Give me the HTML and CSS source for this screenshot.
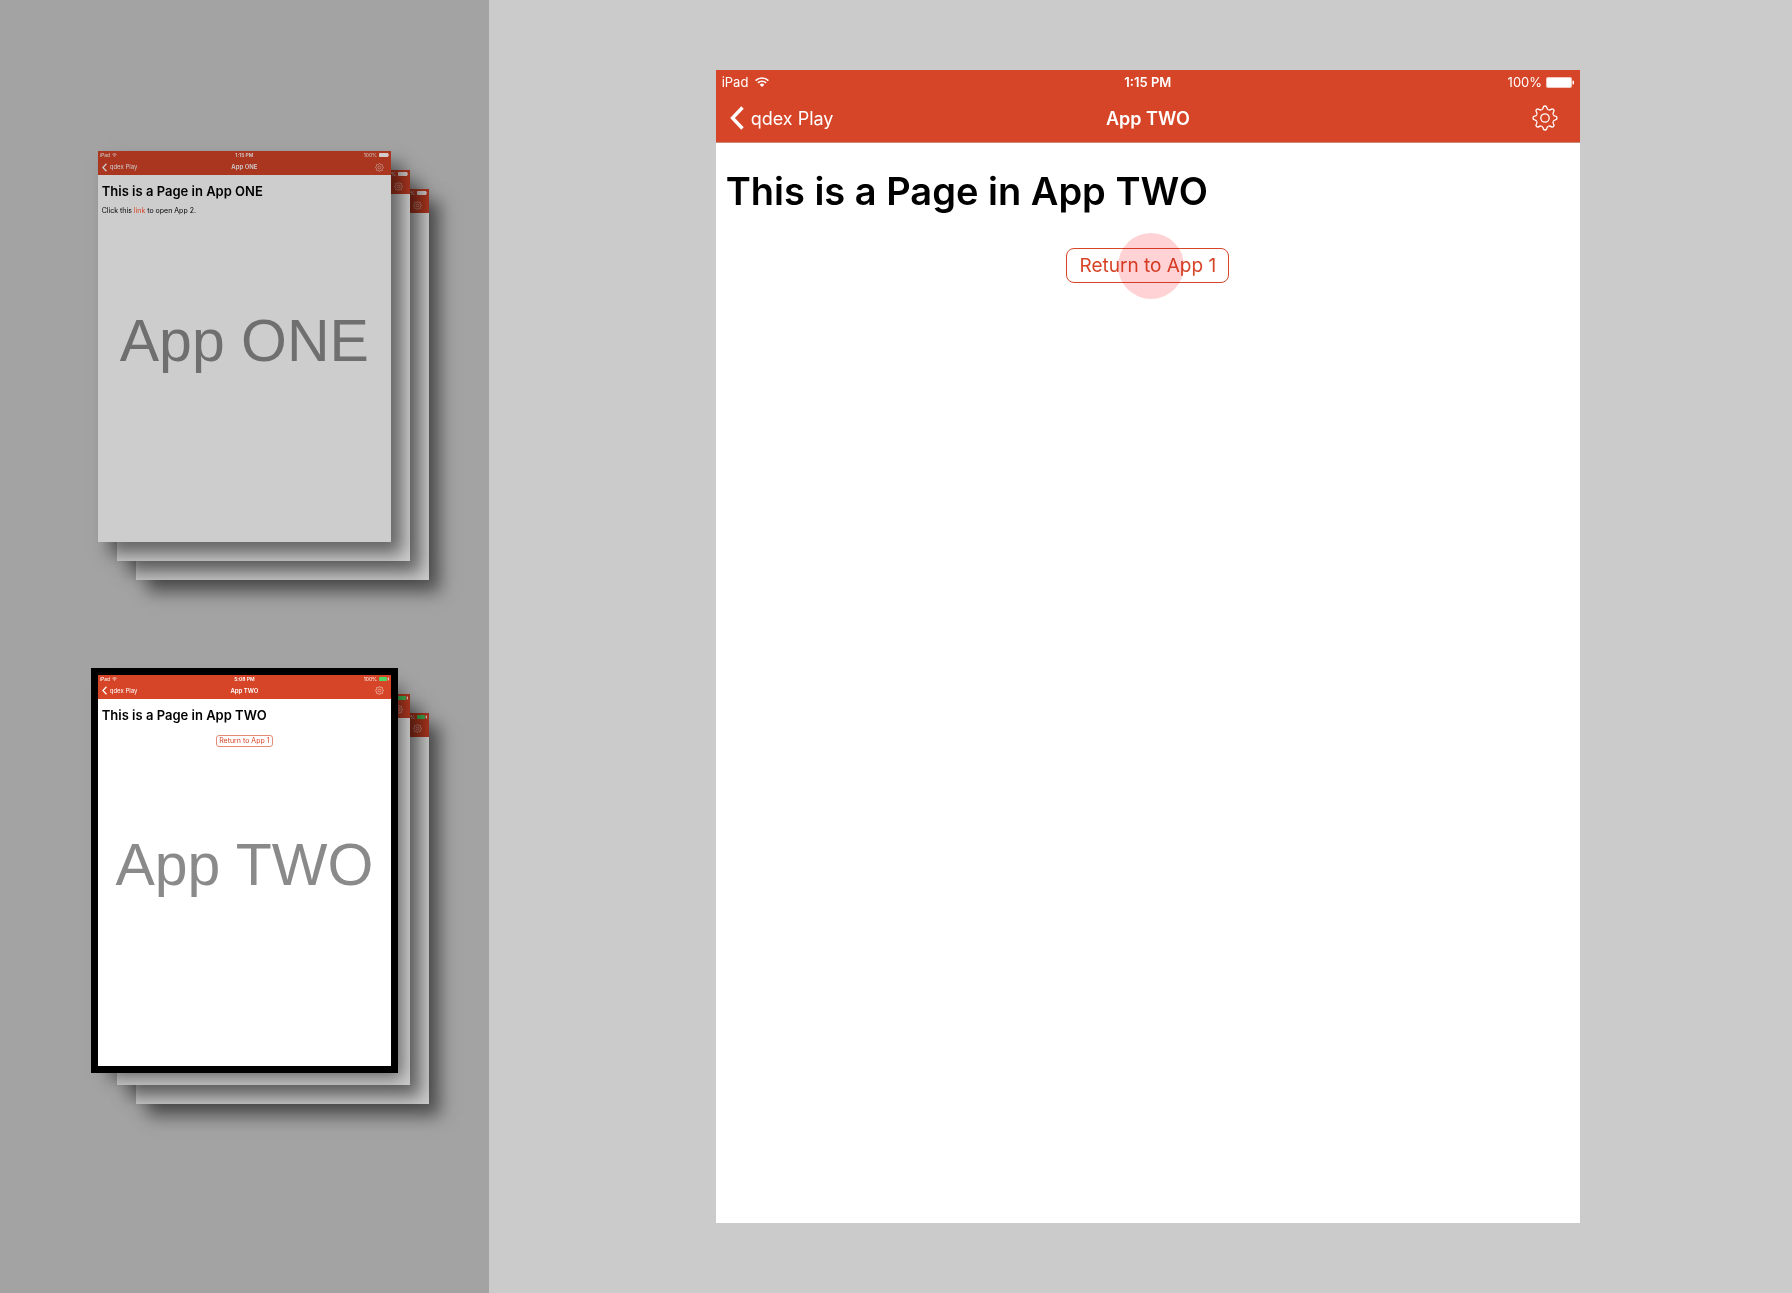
FILE: index.html
```html
<!DOCTYPE html>
<html lang="en">
<head>
<meta charset="utf-8">
<meta name="viewport" content="width=device-width, initial-scale=1">
<title>App TWO</title>
<link rel="stylesheet" href="styles.css">
</head>
<body>
<svg class="defs" aria-hidden="true">
  <defs>
    <path id="tooth" d="M-3.44-8.31C-2.2-8.6-2-9.3-1.8-10.4Q-1.6-12 0-12Q1.6-12 1.8-10.4C2-9.3 2.2-8.6 3.44-8.31"/>
    <symbol id="gear" viewBox="-13 -13 26 26">
      <g fill="none" stroke="currentColor" stroke-width="1.3">
        <use href="#tooth"/>
        <use href="#tooth" transform="rotate(45)"/>
        <use href="#tooth" transform="rotate(90)"/>
        <use href="#tooth" transform="rotate(135)"/>
        <use href="#tooth" transform="rotate(180)"/>
        <use href="#tooth" transform="rotate(225)"/>
        <use href="#tooth" transform="rotate(270)"/>
        <use href="#tooth" transform="rotate(315)"/>
        <circle r="4.2"/>
      </g>
    </symbol>
    <symbol id="wifi" viewBox="0 0 14 10">
      <g fill="none" stroke="currentColor" stroke-width="1.6">
        <path d="M.6 3.6a9.2 9.2 0 0 1 12.8 0"/>
        <path d="M2.9 5.9a5.9 5.9 0 0 1 8.2 0"/>
      </g>
      <path fill="currentColor" d="M4.7 7.7a3.3 3.3 0 0 1 4.6 0L7 10z"/>
    </symbol>
    <symbol id="battery" viewBox="0 0 28 11">
      <rect width="26" height="11" rx="2" fill="#fff" opacity=".7"/>
      <rect x="1" y="1" width="24" height="9" rx="1" fill="currentColor"/>
      <path d="M26.500 3.500a2 2 0 0 1 0 4z" fill="#fff"/>
    </symbol>
    <symbol id="battery-green" viewBox="0 0 28 11">
      <rect width="22" height="11" rx="1" fill="currentColor"/>
      <path d="M26 1.500v8" stroke="#fff" stroke-width="2.500"/>
    </symbol>
    <symbol id="chevron" viewBox="0 0 14 24">
      <path d="M12.500 1.500 2.500 12l10 10.500" fill="none" stroke="currentColor" stroke-width="3.400"/>
    </symbol>
  </defs>
</svg>

<div class="workspace">
  <aside class="sidebar">
    <section class="stack dim">
      <div class="sheet back far">
        <div class="bar">
          <div class="status"><span></span><span></span><span class="power">100%<svg class="battery"><use href="#battery"/></svg></span></div>
          <div class="nav"><span></span><span></span><svg class="gear"><use href="#gear"/></svg></div>
        </div>
      </div>
      <div class="sheet back">
        <div class="bar">
          <div class="status"><span></span><span></span><span class="power">100%<svg class="battery"><use href="#battery"/></svg></span></div>
          <div class="nav"><span></span><span></span><svg class="gear"><use href="#gear"/></svg></div>
        </div>
      </div>
      <article class="sheet front">
        <header class="bar">
          <div class="status"><span class="carrier">iPad<svg class="wifi"><use href="#wifi"/></svg></span><span class="clock">1:15 PM</span><span class="power">100%<svg class="battery"><use href="#battery"/></svg></span></div>
          <div class="nav"><span class="crumb"><svg class="chevron"><use href="#chevron"/></svg>qdex Play</span><span class="name">App ONE</span><svg class="gear"><use href="#gear"/></svg></div>
        </header>
        <div class="page">
          <h2 class="title">This is a Page in App ONE</h2>
          <p class="text">Click this <a href="#app-two">link</a> to open App 2.</p>
        </div>
        <div class="label">App ONE</div>
      </article>
    </section>

    <section class="stack charged">
      <div class="sheet back far">
        <div class="bar">
          <div class="status"><span></span><span></span><span class="power">100%<svg class="battery"><use href="#battery-green"/></svg></span></div>
          <div class="nav"><span></span><span></span><svg class="gear"><use href="#gear"/></svg></div>
        </div>
      </div>
      <div class="sheet back">
        <div class="bar">
          <div class="status"><span></span><span></span><span class="power">100%<svg class="battery"><use href="#battery-green"/></svg></span></div>
          <div class="nav"><span></span><span></span><svg class="gear"><use href="#gear"/></svg></div>
        </div>
      </div>
      <article class="sheet front selected">
        <header class="bar">
          <div class="status"><span class="carrier">iPad<svg class="wifi"><use href="#wifi"/></svg></span><span class="clock">5:08 PM</span><span class="power">100%<svg class="battery"><use href="#battery-green"/></svg></span></div>
          <div class="nav"><span class="crumb"><svg class="chevron"><use href="#chevron"/></svg>qdex Play</span><span class="name">App TWO</span><svg class="gear"><use href="#gear"/></svg></div>
        </header>
        <div class="page">
          <h2 class="title">This is a Page in App TWO</h2>
          <button class="return" type="button">Return to App 1</button>
        </div>
        <div class="label">App TWO</div>
      </article>
    </section>
  </aside>

  <main class="stage">
    <article class="device" id="app-two">
      <header class="bar">
        <div class="status"><span class="carrier">iPad<svg class="wifi"><use href="#wifi"/></svg></span><span class="clock">1:15 PM</span><span class="power">100%<svg class="battery"><use href="#battery"/></svg></span></div>
        <div class="nav">
          <a class="crumb" href="#play"><svg class="chevron" aria-hidden="true"><use href="#chevron"/></svg>qdex Play</a>
          <span class="name">App TWO</span>
          <button class="settings" type="button" aria-label="Settings"><svg class="gear"><use href="#gear"/></svg></button>
        </div>
      </header>
      <div class="page">
        <h1 class="title">This is a Page in App TWO</h1>
        <div class="action">
          <button class="return" type="button">Return to App 1</button>
          <span class="touch"></span>
        </div>
      </div>
    </article>
  </main>
</div>
</body>
</html>
```
FILE: styles.css
```css
* { box-sizing: border-box; }

body {
  margin: 0;
  font-family: Inter, "Liberation Sans", sans-serif;
  color: #000;
}

.defs { position: absolute; width: 0; height: 0; }

.workspace {
  display: grid;
  grid-template-columns: 3fr 8fr;
  min-height: 100vh;
}

.sidebar {
  display: flex;
  flex-direction: column;
  align-items: center;
  gap: 133px;
  padding: 151px 0;
  background: #a3a3a3;
}

.stage {
  display: flex;
  justify-content: center;
  align-items: center;
  padding: 64px 0 64px 15px;
  background: #cbcbcb;
}

/* Screen bar shared by the device and the sheets */
.bar { background: #d64527; color: #fff; }

.status, .nav {
  display: grid;
  grid-template-columns: 1fr auto 1fr;
  align-items: center;
}

.carrier, .power, .crumb { display: flex; align-items: center; }
.power, .gear, .settings { justify-self: end; }
.clock, .name { font-weight: 600; }
.title { margin: 0; font-weight: 600; }

.crumb { color: inherit; text-decoration: none; }

.return {
  display: block;
  margin: 0 auto;
  border: 1px solid #d64527;
  background: #fff;
  color: #d64527;
  font-family: inherit;
  white-space: nowrap;
}

.settings {
  display: flex;
  padding: 0;
  border: 0;
  background: none;
  color: inherit;
}

/* Large device */
.device {
  width: 67.1%;
  aspect-ratio: 3 / 4;
  background: #fff;
}

.device .bar { border-bottom: 1px solid #c98a7a; }
.device .status { height: 24px; padding: 0 6px; font-size: 13px; }
.device .carrier { gap: 7px; }
.device .power { gap: 4px; }
.device .nav { height: 48px; padding: 0 14px; font-size: 18px; }
.device .settings { margin-right: 8px; }
.device .crumb { gap: 7px; }
.device .wifi { width: 14px; height: 10px; }
.device .battery { width: 28px; height: 11px; }
.device .chevron { width: 14px; height: 24px; }
.device .gear { width: 26px; height: 26px; }
.device .page { padding: 24px 10px; }
.device .title { font-size: 38px; line-height: 48px; }

.action {
  position: relative;
  width: fit-content;
  margin: 33px auto 0;
}

.device .return {
  height: 35px;
  padding: 0 12px;
  border-radius: 8px;
  font-size: 19px;
}

.touch {
  position: absolute;
  top: 50%;
  left: 50%;
  width: 66px;
  height: 66px;
  margin: -33px 0 0 -30px;
  border-radius: 50%;
  background: #ffd3d5;
  mix-blend-mode: multiply;
  pointer-events: none;
}

/* Sidebar stacks */
.stack { position: relative; width: 60%; aspect-ratio: 3 / 4; }

.sheet {
  position: relative;
  height: 100%;
  background: #cdcdcd;
  box-shadow: 11px 12px 16px rgba(0, 0, 0, .5);
}

.back { position: absolute; top: 19px; left: 19px; width: 100%; }
.far { top: 38px; left: 38px; }
.selected { background: #fff; outline: 7px solid #000; }

.sheet .status { height: 8px; padding: 0 2px; font-size: 5px; line-height: 8px; }
.sheet .carrier, .sheet .power { gap: 2px; }
.sheet .nav { height: 16px; padding: 0 4px; font-size: 6px; line-height: 16px; }
.sheet .crumb { gap: 3px; }
.sheet .wifi { width: 5px; height: 4px; }
.sheet .battery { width: 10px; height: 4px; }
.sheet .chevron { width: 5px; height: 9px; }
.sheet .gear { width: 9px; height: 9px; margin-right: 3px; }
.sheet .page { height: 118px; padding: 8px 4px; }
.sheet .title { font-size: 13px; line-height: 16px; }
.sheet .text { margin: 6px 0 0; font-size: 7px; line-height: 12px; }
.sheet .text a { color: #d64527; text-decoration: none; }

.sheet .return {
  height: 12px;
  margin-top: 12px;
  padding: 0 2px;
  border-color: #e58a76;
  border-radius: 3px;
  font-size: 7px;
  line-height: 10px;
}

.dim .bar, .back .bar { background: #ab361f; color: #cdcdcd; }
.charged .battery { color: #4cd964; }
.charged .back .battery { color: #3dae50; }

.label {
  color: #8a8a8a;
  font-family: "Liberation Sans", sans-serif;
  font-size: 59px;
  line-height: 96px;
  text-align: center;
  white-space: nowrap;
}

.dim .label { color: #6f6f6f; }
```
